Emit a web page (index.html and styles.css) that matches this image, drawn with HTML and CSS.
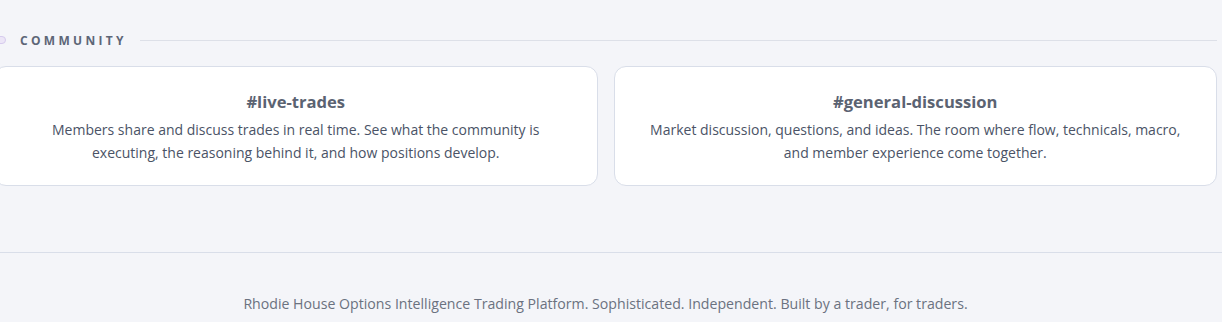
FILE: index.html
```html
<!DOCTYPE html>
<html lang="en">
<head>
    <meta charset="UTF-8">
    <meta name="viewport" content="width=device-width, initial-scale=1.0">
    <title>Rhodie House</title>
    <link rel="stylesheet" href="styles.css">
</head>
<body>
    <div class="page">
        <section class="community">
            <div class="section-head">
                <span class="section-dot"></span>
                <span class="section-label">Community</span>
                <span class="section-line"></span>
            </div>

            <div class="channel-grid">
                <div class="channel-card">
                    <h3>#live-trades</h3>
                    <p>Members share and discuss trades in real time. See what the community is executing, the reasoning behind it, and how positions develop.</p>
                </div>
                <div class="channel-card">
                    <h3>#general-discussion</h3>
                    <p>Market discussion, questions, and ideas. The room where flow, technicals, macro, and member experience come together.</p>
                </div>
            </div>
        </section>
    </div>

    <footer class="footer">
        <p>Rhodie House Options Intelligence Trading Platform. Sophisticated. Independent. Built by a trader, for traders.</p>
    </footer>
</body>
</html>
```

FILE: styles.css
```css
body, html {
    margin: 0;
    padding: 0;
    background: #f4f5f9;
    font-family: "Open Sans", "Noto Sans", sans-serif;
    color: #4b5466;
}

.page {
    margin-left: -6px;
    margin-right: 5px;
}

.community {
    padding-top: 32px;
}

.section-head {
    display: flex;
    align-items: center;
    height: 16px;
}

.section-dot {
    width: 12px;
    height: 8px;
    border-radius: 4px;
    background: #ece6f7;
    border: 1px solid #d6cbee;
    box-sizing: border-box;
}

.section-label {
    margin-left: 14px;
    font-size: 12px;
    font-weight: 700;
    letter-spacing: 3.3px;
    text-transform: uppercase;
    color: #5d6677;
}

.section-line {
    flex: 1;
    height: 1px;
    background: #dde0e8;
    margin-left: 13px;
}

.channel-grid {
    display: grid;
    grid-template-columns: 1fr 1fr;
    gap: 16px;
    margin-top: 18px;
}

.channel-card {
    background: #fff;
    border: 1px solid #d9dee9;
    border-radius: 12px;
    height: 120px;
    box-sizing: border-box;
    padding: 24px 28px 0;
    text-align: center;
}

.channel-card h3 {
    margin: 0;
    font-size: 16.6px;
    font-weight: 700;
    color: #5b6372;
    line-height: 22px;
}

.channel-card p {
    margin: 5px 0 0;
    font-size: 14px;
    line-height: 23px;
    color: #4a5366;
}

.footer {
    margin-top: 66px;
    border-top: 1px solid #d9dee9;
    padding: 40px 11px 0 0;
    text-align: center;
}

.footer p {
    margin: 0;
    font-size: 14.15px;
    color: #6b7280;
    line-height: 22px;
}
```
